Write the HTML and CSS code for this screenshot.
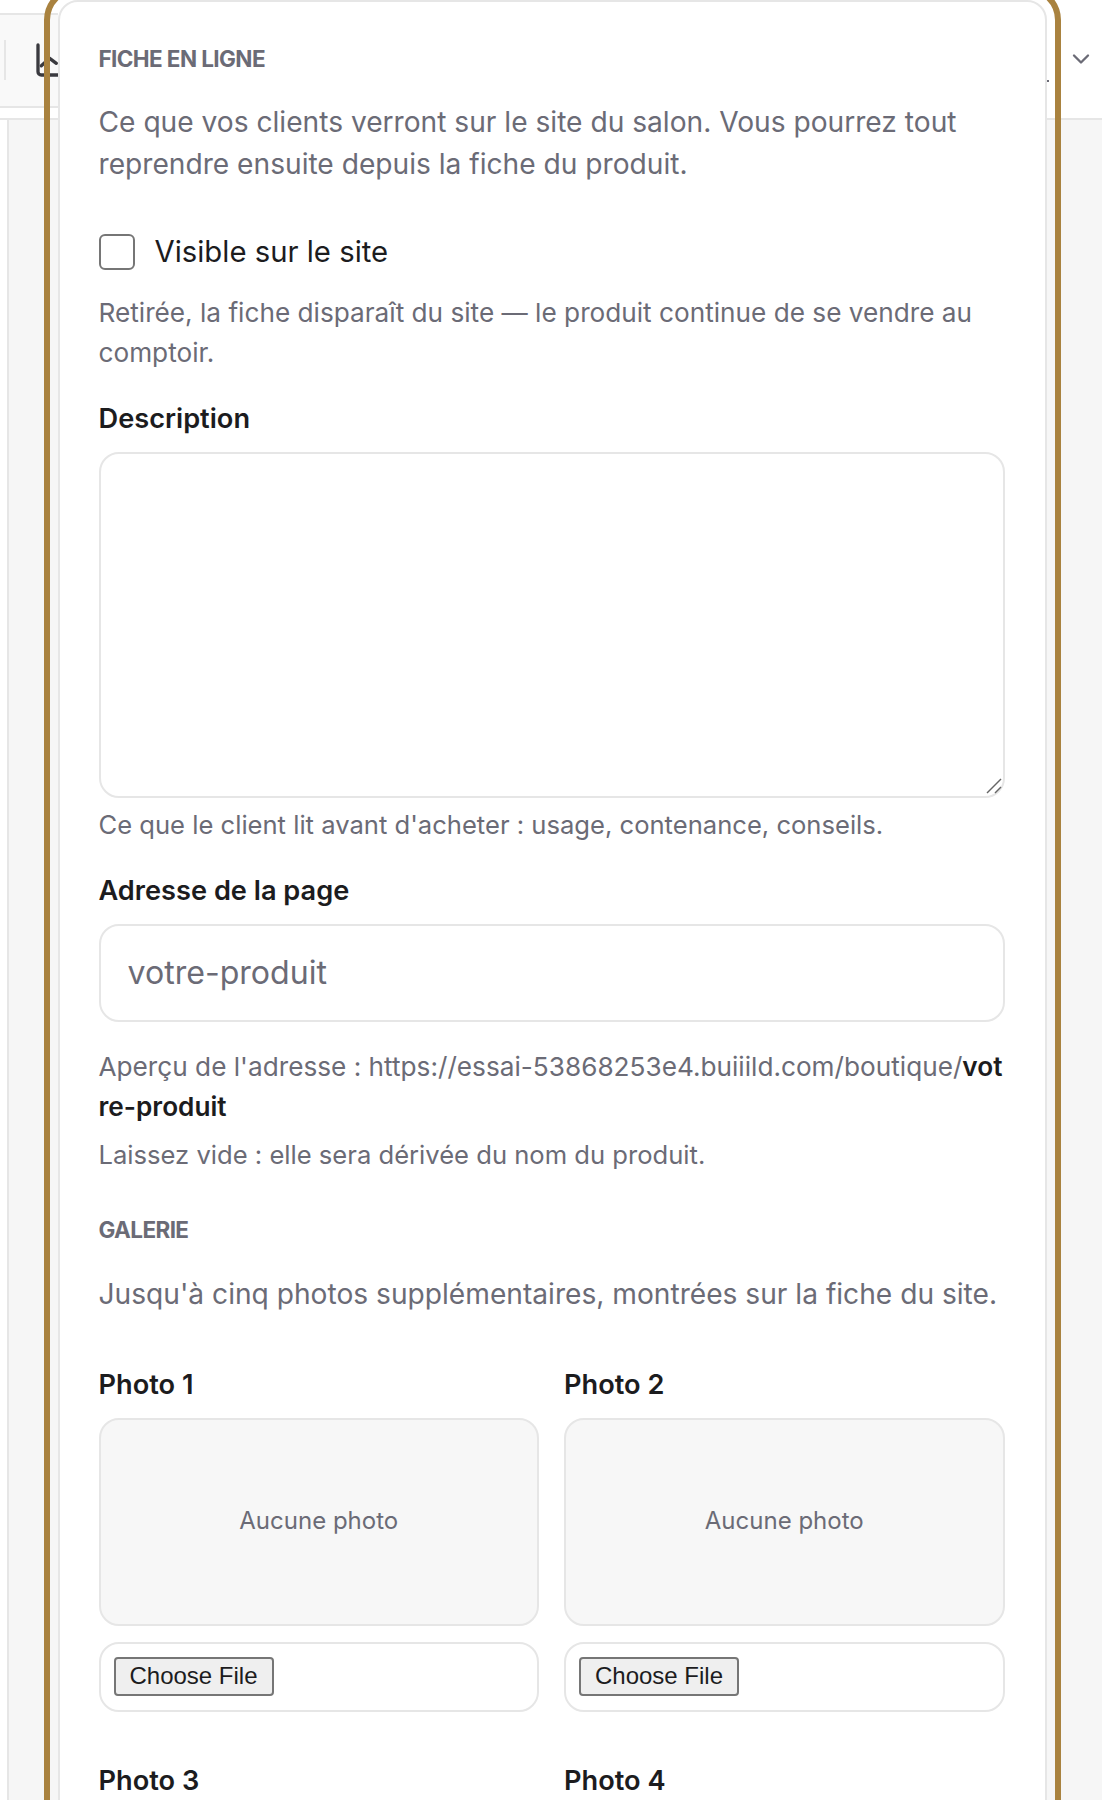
FILE: index.html
```html
<!DOCTYPE html>
<html lang="fr">
<head>
    <meta charset="UTF-8">
    <meta name="viewport" content="width=device-width, initial-scale=1.0">
    <title>Fiche en ligne</title>
    <link rel="stylesheet" href="styles.css">
</head>
<body>
    <!-- Page behind the panel -->
    <div class="backdrop">
        <header class="topbar">
            <div class="tool-group">
                <span class="tool-sep"></span>
                <svg class="chart-icon" viewBox="0 0 24 24" fill="none" stroke="currentColor" stroke-width="2" stroke-linecap="round" stroke-linejoin="round">
                    <path d="M3 3v16a2 2 0 0 0 2 2h16"/>
                    <path d="M5 15.5 10 11 14 14"/>
                </svg>
            </div>
            <span class="topbar-dot"></span>
            <svg class="chevron-icon" viewBox="0 0 24 24" fill="none" stroke="currentColor" stroke-width="2" stroke-linecap="round" stroke-linejoin="round">
                <path d="m6 9 6 6 6-6"/>
            </svg>
        </header>
        <div class="content-rail"></div>
    </div>

    <!-- Panel -->
    <section class="panel">
        <h2 class="section-title">Fiche en ligne</h2>
        <p class="section-text">Ce que vos clients verront sur le site du salon. Vous pourrez tout reprendre ensuite depuis la fiche du produit.</p>

        <label class="check-row">
            <input type="checkbox">
            <span>Visible sur le site</span>
        </label>
        <p class="hint hint-check">Retirée, la fiche disparaît du site — le produit continue de se vendre au comptoir.</p>

        <div class="field field-description">
            <label for="description">Description</label>
            <div class="textarea-wrap">
                <textarea id="description"></textarea>
                <svg class="resize-grip" viewBox="0 0 16 16" fill="none" stroke="currentColor" stroke-width="1.5">
                    <path d="M1 15 15 1"/>
                    <path d="M9 15 15 9"/>
                </svg>
            </div>
            <p class="hint">Ce que le client lit avant d'acheter : usage, contenance, conseils.</p>
        </div>

        <div class="field field-slug">
            <label for="slug">Adresse de la page</label>
            <input type="text" id="slug" placeholder="votre-produit">
            <p class="url-preview">Aperçu de l'adresse : https://essai-53868253e4.buiiild.com/boutique/<strong>votre-produit</strong></p>
            <p class="hint hint-small">Laissez vide : elle sera dérivée du nom du produit.</p>
        </div>

        <h2 class="section-title gallery-title">Galerie</h2>
        <p class="section-text gallery-text">Jusqu'à cinq photos supplémentaires, montrées sur la fiche du site.</p>

        <div class="photo-grid">
            <div class="photo">
                <label>Photo 1</label>
                <div class="photo-empty">Aucune photo</div>
                <div class="photo-file"><input type="file"></div>
            </div>
            <div class="photo">
                <label>Photo 2</label>
                <div class="photo-empty">Aucune photo</div>
                <div class="photo-file"><input type="file"></div>
            </div>
            <div class="photo">
                <label>Photo 3</label>
            </div>
            <div class="photo">
                <label>Photo 4</label>
            </div>
        </div>
    </section>
</body>
</html>
```

FILE: styles.css
```css
:root {
    --ink: #1c1c1e;
    --muted: #6b6b76;
    --line: #e6e6e6;
    --soft: #f6f6f6;
    --gold: #a9823f;
}

* {
    margin: 0;
    padding: 0;
    box-sizing: border-box;
}

html, body {
    height: 1800px;
    overflow: hidden;
}

body {
    position: relative;
    font-family: Inter, "Liberation Sans", sans-serif;
    background: var(--soft);
    color: var(--ink);
}

/* Page behind the panel */
.topbar {
    display: flex;
    align-items: center;
    height: 120px;
    background: #fff;
    border-bottom: 2px solid var(--line);
}

.tool-group {
    display: flex;
    align-items: center;
    align-self: flex-start;
    width: 58px;
    height: 95px;
    margin-top: 13px;
    padding-left: 4px;
    padding-bottom: 2px;
    background: #f9f9f9;
    color: #3a3a3f;
    border-top: 2px solid var(--line);
    border-bottom: 2px solid var(--line);
}

.tool-sep {
    flex: none;
    width: 2px;
    height: 40px;
    background: var(--line);
}

.chart-icon {
    flex: none;
    width: 40px;
    height: 40px;
    margin-left: 27px;
}

.topbar-dot {
    width: 2px;
    height: 2px;
    margin-top: 44px;
    margin-left: auto;
    margin-right: 18px;
    background: var(--muted);
}

.chevron-icon {
    flex: none;
    width: 28px;
    height: 28px;
    margin-right: 7px;
    color: var(--muted);
}

.content-rail {
    width: 9px;
    height: 1680px;
    background: #fff;
    border-right: 2px solid var(--line);
}

/* Panel */
.panel {
    position: absolute;
    top: 0;
    left: 57.5px;
    width: 989px;
    height: 1830px;
    padding: 43px 40px 0 39px;
    background: #fff;
    border: 2px solid var(--line);
    border-radius: 20px;
    outline: 6px solid var(--gold);
    outline-offset: 8.5px;
}

.section-title {
    font-size: 22.5px;
    line-height: 28px;
    font-weight: 650;
    letter-spacing: -0.6px;
    text-transform: uppercase;
    color: var(--muted);
}

.section-text {
    margin-top: 28px;
    font-size: 28.15px;
    line-height: 42px;
    color: var(--muted);
}

.gallery-text {
    margin-top: 29px;
}

.check-row {
    display: flex;
    align-items: center;
    gap: 20px;
    margin-top: 49px;
    font-size: 29.3px;
    line-height: 36px;
}

.check-row input {
    flex: none;
    width: 36px;
    height: 36px;
    appearance: none;
    background: #fff;
    border: 2px solid #767676;
    border-radius: 6px;
}

.hint {
    font-size: 25.6px;
    line-height: 40px;
    color: var(--muted);
}

.hint-check {
    margin-top: 23px;
    font-size: 26.2px;
}

.field label,
.photo label {
    display: block;
    font-size: 27.2px;
    line-height: 34px;
    font-weight: 600;
}

.field-description {
    margin-top: 29px;
}

.textarea-wrap {
    position: relative;
    margin-top: 16px;
}

.field textarea {
    display: block;
    width: 100%;
    height: 346px;
    background: #fff;
    border: 2px solid var(--line);
    border-radius: 20px;
    resize: none;
}

.resize-grip {
    position: absolute;
    right: 3px;
    bottom: 4px;
    width: 16px;
    height: 16px;
    color: #666;
}

.field-description .hint {
    margin-top: 7px;
}

.field-slug {
    margin-top: 29px;
}

.field input {
    display: block;
    width: 100%;
    height: 98px;
    margin-top: 16px;
    padding: 0 27px 2px;
    font-family: inherit;
    font-size: 32.1px;
    color: var(--ink);
    border: 2px solid var(--line);
    border-radius: 20px;
}

.field input::placeholder {
    color: var(--muted);
    opacity: 1;
}

.url-preview {
    margin-top: 25px;
    font-size: 26.2px;
    line-height: 40px;
    color: var(--muted);
    word-break: break-all;
}

.url-preview strong {
    font-weight: 600;
    color: var(--ink);
}

.hint-small {
    margin-top: 8px;
}

.gallery-title {
    margin-top: 41px;
}

.photo-grid {
    display: grid;
    grid-template-columns: minmax(0, 1fr) minmax(0, 1fr);
    gap: 52px 25px;
    margin-top: 53px;
}

.photo-empty {
    display: flex;
    align-items: center;
    justify-content: center;
    height: 208px;
    margin-top: 16px;
    padding-bottom: 4px;
    font-size: 24px;
    color: var(--muted);
    background: #f7f7f7;
    border: 2px solid var(--line);
    border-radius: 20px;
}

.photo-file {
    display: flex;
    align-items: center;
    height: 70px;
    margin-top: 16px;
    padding: 0 0 2px 13px;
    border: 2px solid var(--line);
    border-radius: 20px;
}

/* Only the button of the file input shows */
.photo-file input {
    width: 160px;
    font-family: "Liberation Sans", sans-serif;
    font-size: 24px;
    color: var(--ink);
}

.photo-file input::file-selector-button {
    width: 160px;
    height: 39px;
    margin: 0;
    padding: 0;
    font: inherit;
    color: var(--ink);
    background: #efefef;
    border: 2px solid #767676;
    border-radius: 4px;
}
```
